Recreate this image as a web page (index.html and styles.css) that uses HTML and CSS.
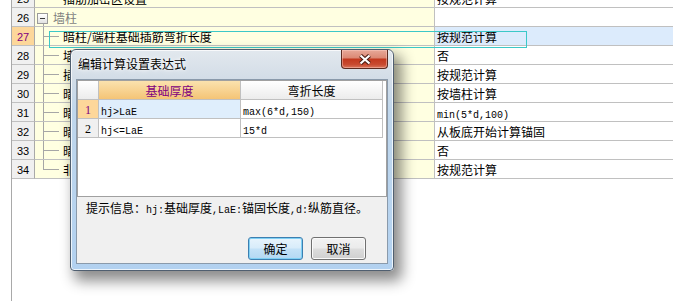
FILE: index.html
```html
<!DOCTYPE html>
<html>
<head>
<meta charset="utf-8">
<link rel="stylesheet" href="styles.css">
</head>
<body>
<div class="page">
  <div class="edge"></div>
  <div class="table">
    <div class="row"><div class="num">25</div><div class="name"><span class="gap"></span><span class="txt">插筋加密区设置</span></div><div class="val">按规范计算</div></div>
    <div class="row"><div class="num">26</div><div class="name group-row"><span class="toggle"></span><span class="txt group">墙柱</span></div><div class="val"></div></div>
    <div class="row sel"><div class="num">27</div><div class="name"><span class="tree"></span><span class="txt">暗柱/端柱基础插筋弯折长度</span></div><div class="val">按规范计算</div></div>
    <div class="row"><div class="num">28</div><div class="name"><span class="tree"></span><span class="txt">墙柱纵筋基础锚固长度</span></div><div class="val">否</div></div>
    <div class="row"><div class="num">29</div><div class="name"><span class="tree"></span><span class="txt">插筋是否伸到基础底部</span></div><div class="val">按规范计算</div></div>
    <div class="row"><div class="num">30</div><div class="name"><span class="tree"></span><span class="txt">暗柱顶部锚固长度</span></div><div class="val">按墙柱计算</div></div>
    <div class="row"><div class="num">31</div><div class="name"><span class="tree"></span><span class="txt">暗柱纵筋弯折长度</span></div><div class="val"><span class="mono">min(5*d,100)</span></div></div>
    <div class="row"><div class="num">32</div><div class="name"><span class="tree"></span><span class="txt">暗柱基础插筋锚固</span></div><div class="val">从板底开始计算锚固</div></div>
    <div class="row"><div class="num">33</div><div class="name"><span class="tree"></span><span class="txt">暗柱封顶按框架柱计算</span></div><div class="val">否</div></div>
    <div class="row"><div class="num">34</div><div class="name"><span class="tree last"></span><span class="txt">非框架柱插筋计算</span></div><div class="val">按规范计算</div></div>
  </div>
</div>
<div class="focus"></div>
<div class="dialog">
  <div class="titlebar">
    <span class="title">编辑计算设置表达式</span>
    <span class="close"><svg width="14" height="11" viewBox="0 0 14 11"><path d="M2.5 1.5 L11.5 9.5 M11.5 1.5 L2.5 9.5" stroke="#4a1d14" stroke-width="4.2"/><path d="M2.5 1.5 L11.5 9.5 M11.5 1.5 L2.5 9.5" stroke="#ffffff" stroke-width="2.2"/></svg></span>
  </div>
  <div class="client">
    <div class="dgrid">
      <div class="drow head">
        <div class="rn"></div>
        <div class="c1 hot">基础厚度</div>
        <div class="c2">弯折长度</div>
        <div class="fill"></div>
      </div>
      <div class="drow cur">
        <div class="rn">1</div>
        <div class="c1"><span class="mono">hj&gt;LaE</span></div>
        <div class="c2"><span class="mono">max(6*d,150)</span></div>
        <div class="fill"></div>
      </div>
      <div class="drow">
        <div class="rn">2</div>
        <div class="c1"><span class="mono">hj&lt;=LaE</span></div>
        <div class="c2"><span class="mono">15*d</span></div>
        <div class="fill"></div>
      </div>
    </div>
    <div class="hint">提示信息：<span class="mono">hj:</span>基础厚度<span class="mono">,LaE:</span>锚固长度<span class="mono">,d:</span>纵筋直径。</div>
    <div class="buttons">
      <span class="btn primary">确定</span>
      <span class="btn">取消</span>
    </div>
  </div>
</div>
</body>
</html>
```

FILE: styles.css
```css
body {
  margin: 0;
  background: #ffffff;
  font-family: "Noto Sans CJK SC", sans-serif;
  font-size: 12px;
  color: #000;
  overflow: hidden;
}

.mono {
  font-family: "Liberation Mono", monospace;
  font-size: 10px;
}

.page {
  display: flex;
  height: 301px;
}

.edge {
  width: 12px;
  flex: none;
  box-sizing: border-box;
  border-right: 1px solid #a9a9a9;
}

.table {
  flex: 1;
  margin-top: -11px;
}

.row {
  display: flex;
  height: 19px;
}

.row > div {
  box-sizing: border-box;
  height: 19px;
  padding-top: 2px;
  border-bottom: 1px solid #c0c0c0;
  white-space: nowrap;
  overflow: hidden;
  line-height: 16px;
}

.num {
  width: 23px;
  flex: none;
  background: #f0f0f0;
  border-right: 1px solid #a9a9a9;
  text-align: center;
  font-family: "Liberation Sans", sans-serif;
  font-size: 11px;
}

.row > .name {
  width: 400px;
  flex: none;
  background: #ffffe1;
  border-right: 1px solid #c0c0c0;
  display: flex;
  padding-top: 0;
  padding-left: 8px;
}

.txt {
  padding-top: 2px;
}

.val {
  flex: 1;
  padding-left: 2px;
  background: #ffffff;
}

.sel .num {
  background: #fdd79a;
  color: #800080;
}

.sel .val {
  background: #dcebfc;
}

.gap {
  width: 20px;
  flex: none;
}

.tree {
  width: 20px;
  flex: none;
  background:
    linear-gradient(#a6a6a6, #a6a6a6) 0 0 / 1px 100% no-repeat,
    linear-gradient(#a6a6a6, #a6a6a6) 0 9px / 16px 1px no-repeat;
}

.tree.last {
  background:
    linear-gradient(#a6a6a6, #a6a6a6) 0 0 / 1px 10px no-repeat,
    linear-gradient(#a6a6a6, #a6a6a6) 0 9px / 16px 1px no-repeat;
}

.row > .group-row {
  padding-left: 2px;
  background:
    linear-gradient(#a6a6a6, #a6a6a6) 8px 16px / 1px 3px no-repeat,
    #ffffe1;
}

.toggle {
  width: 11px;
  height: 11px;
  flex: none;
  box-sizing: border-box;
  margin-top: 5px;
  border: 1px solid #9a9a9a;
  background:
    linear-gradient(#3a3a3a, #3a3a3a) center / 5px 1px no-repeat,
    linear-gradient(#ffffff, #e2e2e2);
}

.group {
  margin-left: 5px;
  color: #7f7f7f;
}

.focus {
  position: absolute;
  left: 49px;
  top: 31px;
  width: 478px;
  height: 17px;
  box-sizing: border-box;
  border: 1px solid #3cc8c8;
}

/* dialog */
.dialog {
  position: absolute;
  left: 70px;
  top: 49px;
  width: 324px;
  height: 222px;
  box-sizing: border-box;
  border: 1px solid #505f70;
  border-radius: 6px 6px 4px 4px;
  background: linear-gradient(180deg, #e2e8ee 0, #d3dde7 28px, #c0d7ec 60px, #b2d1f0 100%);
  box-shadow: 6px 8px 14px 2px rgba(0, 0, 0, 0.45), inset 0 0 0 1px rgba(255, 255, 255, 0.75);
  display: flex;
  flex-direction: column;
  padding: 0 5px 6px 5px;
}

.titlebar {
  height: 29px;
  flex: none;
  display: flex;
  align-items: center;
  padding-left: 2px;
}

.title {
  padding-bottom: 2px;
  color: #000;
  text-shadow: 0 0 6px #ffffff, 0 0 3px #ffffff;
}

.close {
  margin-left: auto;
  align-self: flex-start;
  width: 47px;
  height: 19px;
  box-sizing: border-box;
  border: 1px solid #5b2b21;
  border-top: none;
  border-radius: 0 0 4px 4px;
  background: linear-gradient(180deg, #e7a999 0%, #dc8a76 42%, #c2391f 52%, #c84a30 80%, #d9755c 100%);
  box-shadow: inset 0 0 0 1px rgba(255, 210, 200, 0.45);
  display: flex;
  align-items: center;
  justify-content: center;
}

.client {
  flex: 1;
  background: #f0f0f0;
  border: 1px solid #8a9aab;
  display: flex;
  flex-direction: column;
}

.dgrid {
  height: 117px;
  box-sizing: border-box;
  border: 1px solid #a0a0a0;
  background: #ffffff;
}

.drow {
  display: flex;
  height: 19px;
}

.drow > div {
  box-sizing: border-box;
  height: 19px;
  padding-top: 2px;
  border-bottom: 1px solid #c0c0c0;
  border-right: 1px solid #c0c0c0;
  line-height: 16px;
  white-space: nowrap;
  overflow: hidden;
}

.drow .rn {
  width: 21px;
  flex: none;
  background: #f0f0f0;
  text-align: center;
  font-family: "Liberation Serif", serif;
  font-size: 12px;
}

.drow .c1,
.drow .c2 {
  width: 142px;
  flex: none;
  padding-left: 2px;
}

.drow .fill {
  flex: 1;
  border-right: none;
  border-bottom: none;
}

.drow.head > div {
  background: linear-gradient(#ffffff, #ececec);
  text-align: center;
  padding-left: 0;
}

.drow.head .hot {
  background: linear-gradient(#fbe2ae, #f4c476);
  color: #800080;
}

.drow.head .fill {
  background: #ffffff;
}

.drow.cur .rn {
  background: #fdd79a;
  color: #800080;
}

.drow.cur .c1 {
  background: #dfeefc;
}

.hint {
  margin-top: 3px;
  padding-left: 9px;
  line-height: 16px;
  white-space: nowrap;
}

.buttons {
  margin-top: auto;
  margin-bottom: 3px;
  display: flex;
  justify-content: flex-end;
  gap: 8px;
  padding-right: 21px;
}

.btn {
  width: 55px;
  height: 23px;
  box-sizing: border-box;
  border: 1px solid #707070;
  border-radius: 3px;
  background: linear-gradient(180deg, #f2f2f2 0%, #ebebeb 48%, #dddddd 52%, #cfcfcf 100%);
  box-shadow: inset 0 0 0 1px #fafafa;
  text-align: center;
  line-height: 21px;
}

.btn.primary {
  border-color: #3c7fb1;
  background: linear-gradient(180deg, #e8f4fc 0%, #d8ecfa 48%, #c4e2f7 52%, #b3d8f3 100%);
  box-shadow: inset 0 0 0 1px #7fd0f4;
}
```
